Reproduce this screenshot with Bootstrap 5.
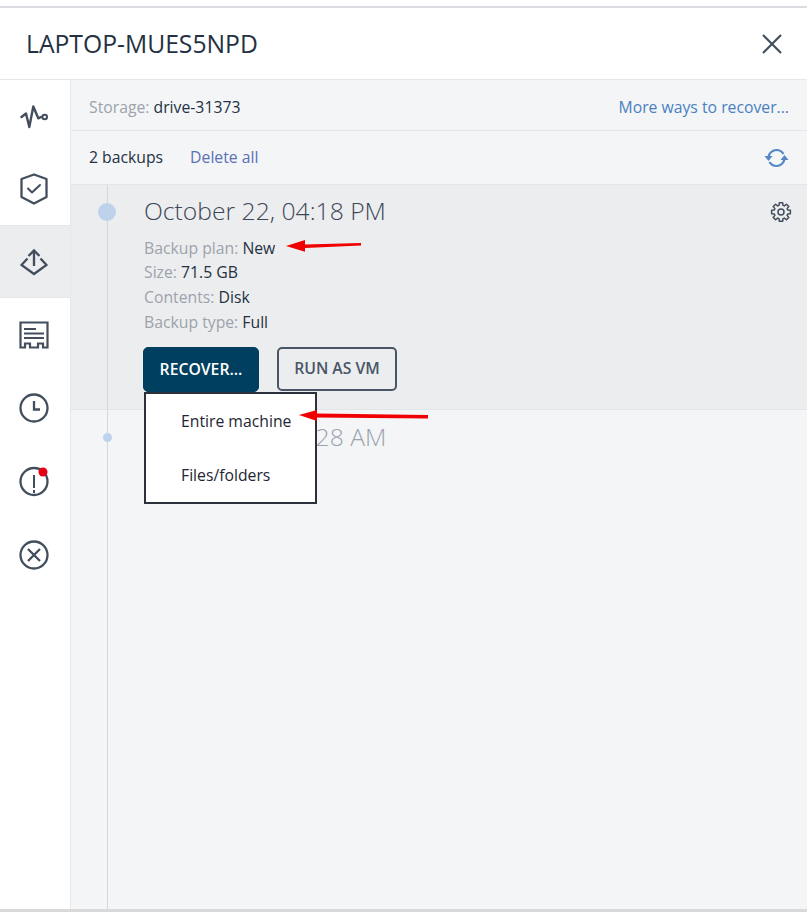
<!DOCTYPE html>
<html lang="en">
<head>
<meta charset="utf-8">
<title>LAPTOP-MUES5NPD</title>
<link href="https://cdn.jsdelivr.net/npm/bootstrap@5.3.0/dist/css/bootstrap.min.css" rel="stylesheet">
<style>
html,body{height:100%}
body{font-family:"Open Sans",sans-serif;font-size:15.75px;color:#243142;background:#fff;overflow:hidden}
.shell{height:912px;position:relative}
.topstrip{height:8px;flex:none;border-bottom:2px solid #dcdde2}
.head-bar{height:72px;flex:none;padding:0 24px 0 26px;border-bottom:1px solid #e4e7ec}
.head-title{font-size:24.7px;color:#243142;margin:0;font-weight:400;line-height:1.2}
.body-wrap{flex:1;min-height:0}
.side-rail{width:71px;flex:none;border-right:1px solid #e4e7ec;background:#fff}
.rail-item{height:73px;flex:none;border-top:1px solid transparent;border-bottom:1px solid transparent;padding:1px 3px 0 0}
.rail-item.first-it{height:72px;padding-top:2px}
.rail-item.last-it{padding-top:3px}
.rail-item.on{background:#ecedef;border-color:#e4e7ec}
.rail-item svg{display:block}
.content-pane{background:#f3f5f7;position:relative}
.bar-a{height:51px;flex:none;padding:5px 18px 0;border-bottom:1px solid #e2e5e9}
.bar-b{height:54px;flex:none;padding:0 18px;border-bottom:1px solid #e2e5e9}
.mute{color:#9ca3ac}
.lnk{color:#4a7fc1;text-decoration:none}
.lnk2{color:#5b70b5;text-decoration:none;margin-left:27px}
.tl-line{position:absolute;left:36px;top:105px;bottom:0;width:1px;background:#d0d8e2;z-index:1}
.bk-row{position:relative;padding-left:73px}
.bk-row.sel{height:225px;background:#ecedef;border-bottom:1px solid #e2e5e9;padding-top:9px}
.bk-date{font-size:24.7px;line-height:33px;font-weight:300;color:#3c4858;margin:0 0 8px}
.bk-date.dim{color:#9ca3ac;margin-top:10px}
.bk-line{line-height:25px}
.bk-line.lead-it{padding-top:1px;height:25px}
.dot-big{position:absolute;left:27px;top:18px;width:18px;height:18px;border-radius:50%;background:#bfd2ec;z-index:2}
.dot-small{position:absolute;left:32px;top:23px;width:9px;height:9px;border-radius:50%;background:#bfd2ec;z-index:2}
.gear{position:absolute;right:15px;top:16px}
.acts{margin-top:12px;margin-left:-1px;gap:18px}
.btn-rec,.btn-vm{height:45px;padding:0;font-size:15.75px;font-weight:600;border-radius:5px;display:flex;align-items:center;justify-content:center}
.btn-rec{width:116px;background:#003f5f;border:1px solid #003f5f;color:#fff}
.btn-vm{width:120px;height:44px;background:transparent;border:2px solid #4a5566;color:#4a5566}
.drop{position:absolute;left:73px;top:207px;width:173px;height:112px;background:#fff;border:2px solid #2b303a;z-index:3;padding-top:1px}
.drop-it{height:54px;display:flex;align-items:center;padding-left:35px;color:#1d2634;text-decoration:none}
.arrow{position:absolute;z-index:5;display:block}
.arrow-a{left:214px;top:156px}
.arrow-b{left:227px;top:327px}
.footline{height:3px;flex:none;background:#d9d9d9}
</style>
</head>
<body>
<div class="shell d-flex flex-column">
  <div class="topstrip"></div>
  <div class="head-bar d-flex align-items-center justify-content-between">
    <h1 class="head-title">LAPTOP-MUES5NPD</h1>
    <svg width="22" height="22" viewBox="0 0 22 22" fill="none" stroke="#434e5c" stroke-width="2.2"><path d="M2 2 20 20M20 2 2 20"/></svg>
  </div>
  <div class="body-wrap d-flex">
    <nav class="side-rail d-flex flex-column">
      <div class="rail-item first-it d-flex align-items-center justify-content-center">
        <svg width="28" height="24" viewBox="0 0 28 24" fill="none" stroke="#434e5c" stroke-width="2.4" stroke-linejoin="round" stroke-linecap="round"><path d="M1.500 12 6 8.500 9.300 22 13.300 1.500 18.300 13.300 21 12"/><circle cx="24.700" cy="12" r="2.300" stroke-width="2"/></svg>
      </div>
      <div class="rail-item d-flex align-items-center justify-content-center">
        <svg width="28" height="32" viewBox="0 0 28 32" fill="none" stroke="#434e5c" stroke-width="2.300" stroke-linejoin="round" stroke-linecap="round"><path d="M14 1.500 26.500 6V24L14 30.500 1.500 24V6Z"/><path d="M8 15.500 12 19.500 20 12" stroke-width="2"/></svg>
      </div>
      <div class="rail-item on d-flex align-items-center justify-content-center">
        <svg width="28" height="30" viewBox="0 0 28 30" fill="none" stroke="#434e5c" stroke-width="2.300" stroke-linejoin="miter"><path d="M14 19V3.500M8.500 9 14 3.500 19.500 9"/><path d="M7.500 11.500 1.500 18 14 27 26.500 18 20.500 11.500"/></svg>
      </div>
      <div class="rail-item d-flex align-items-center justify-content-center">
        <svg width="30" height="28" viewBox="0 0 30 28" fill="none" stroke="#434e5c" stroke-width="2.200"><path d="M1.500 1.500H28.500V26.500H24V22.500H19V26.500H11V22.500H6V26.500H1.500Z"/><path d="M5 8H17M5 12.500H25M5 17H25"/></svg>
      </div>
      <div class="rail-item d-flex align-items-center justify-content-center">
        <svg width="30" height="30" viewBox="0 0 30 30" fill="none" stroke="#434e5c" stroke-width="2.300"><circle cx="15" cy="15" r="13.500"/><path d="M15 8V16.500H21"/></svg>
      </div>
      <div class="rail-item d-flex align-items-center justify-content-center">
        <svg width="32" height="32" viewBox="0 0 32 32" fill="none" stroke="#434e5c" stroke-width="2.300"><circle cx="16" cy="16.500" r="13.500"/><path d="M16 10V23M16 25V28" stroke-width="2"/><circle cx="25" cy="7" r="4.500" fill="#e60012" stroke="none"/></svg>
      </div>
      <div class="rail-item last-it d-flex align-items-center justify-content-center">
        <svg width="30" height="30" viewBox="0 0 30 30" fill="none" stroke="#434e5c" stroke-width="2.300"><circle cx="15" cy="15" r="13.500"/><path d="M9 9 21 21M21 9 9 21"/></svg>
      </div>
    </nav>
    <main class="content-pane flex-grow-1 d-flex flex-column">
      <div class="bar-a d-flex align-items-center justify-content-between">
        <div><span class="mute">Storage:</span> drive-31373</div>
        <a class="lnk" href="#">More ways to recover...</a>
      </div>
      <div class="bar-b d-flex align-items-center justify-content-between">
        <div>2 backups<a class="lnk2" href="#">Delete all</a></div>
        <svg width="25" height="20" viewBox="0 0 25 20" fill="none" stroke="#5586c6" stroke-width="2.200"><path d="M4.500 9C5 5 8.500 2 12.500 2 15.500 2 18 3.500 19.500 6"/><path d="M20.500 11C20 15 16.500 18 12.500 18 9.500 18 7 16.500 5.500 14"/><path d="M0.500 8H8.500L4.500 13Z" fill="#5586c6" stroke="none"/><path d="M16.500 12H24.500L20.500 7Z" fill="#5586c6" stroke="none"/></svg>
      </div>
      <div class="tl-line"></div>
      <section class="bk-row sel">
        <span class="dot-big"></span>
        <svg class="gear" width="22" height="22" viewBox="-11 -11 22 22" fill="none" stroke="#434e5c" stroke-width="1.500" stroke-linejoin="round"><path d="M-1.930-6.730-1.650-9.360 1.650-9.360 1.930-6.730 3.390-6.120 5.450-7.780 7.780-5.450 6.120-3.390 6.730-1.930 9.360-1.650 9.360 1.650 6.730 1.930 6.120 3.390 7.780 5.450 5.450 7.780 3.390 6.120 1.930 6.730 1.650 9.360-1.650 9.360-1.930 6.730-3.390 6.120-5.450 7.780-7.780 5.450-6.120 3.390-6.730 1.930-9.360 1.650-9.360-1.650-6.730-1.930-6.120-3.390-7.780-5.450-5.450-7.780-3.390-6.120Z"/><circle r="3"/></svg>
        <h2 class="bk-date">October 22, 04:18 PM</h2>
        <div class="bk-line lead-it"><span class="mute">Backup plan:</span> New</div>
        <div class="bk-line"><span class="mute">Size:</span> 71.5 GB</div>
        <div class="bk-line"><span class="mute">Contents:</span> Disk</div>
        <div class="bk-line"><span class="mute">Backup type:</span> Full</div>
        <div class="acts d-flex align-items-start">
          <button class="btn btn-rec" type="button">RECOVER...</button>
          <button class="btn btn-vm" type="button">RUN AS VM</button>
        </div>
        <div class="drop">
          <a class="drop-it" href="#">Entire machine</a>
          <a class="drop-it" href="#">Files/folders</a>
        </div>
      </section>
      <section class="bk-row">
        <span class="dot-small"></span>
        <h2 class="bk-date dim">October 22, 09:28 AM</h2>
      </section>
      <svg class="arrow arrow-a" width="80" height="17" viewBox="0 0 80 17"><path d="M1 10 20 4 20 8.500 76 7 76 9.500 20 12 20 15.700Z" fill="#f00000"/></svg>
      <svg class="arrow arrow-b" width="132" height="18" viewBox="0 0 132 18"><path d="M1 8 19 3 19 6.500 130 8 130 11.500 19 10.500 19 14Z" fill="#f00000"/></svg>
    </main>
  </div>
  <div class="footline"></div>
</div>
<script src="https://cdn.jsdelivr.net/npm/bootstrap@5.3.0/dist/js/bootstrap.bundle.min.js"></script>
</body>
</html>
